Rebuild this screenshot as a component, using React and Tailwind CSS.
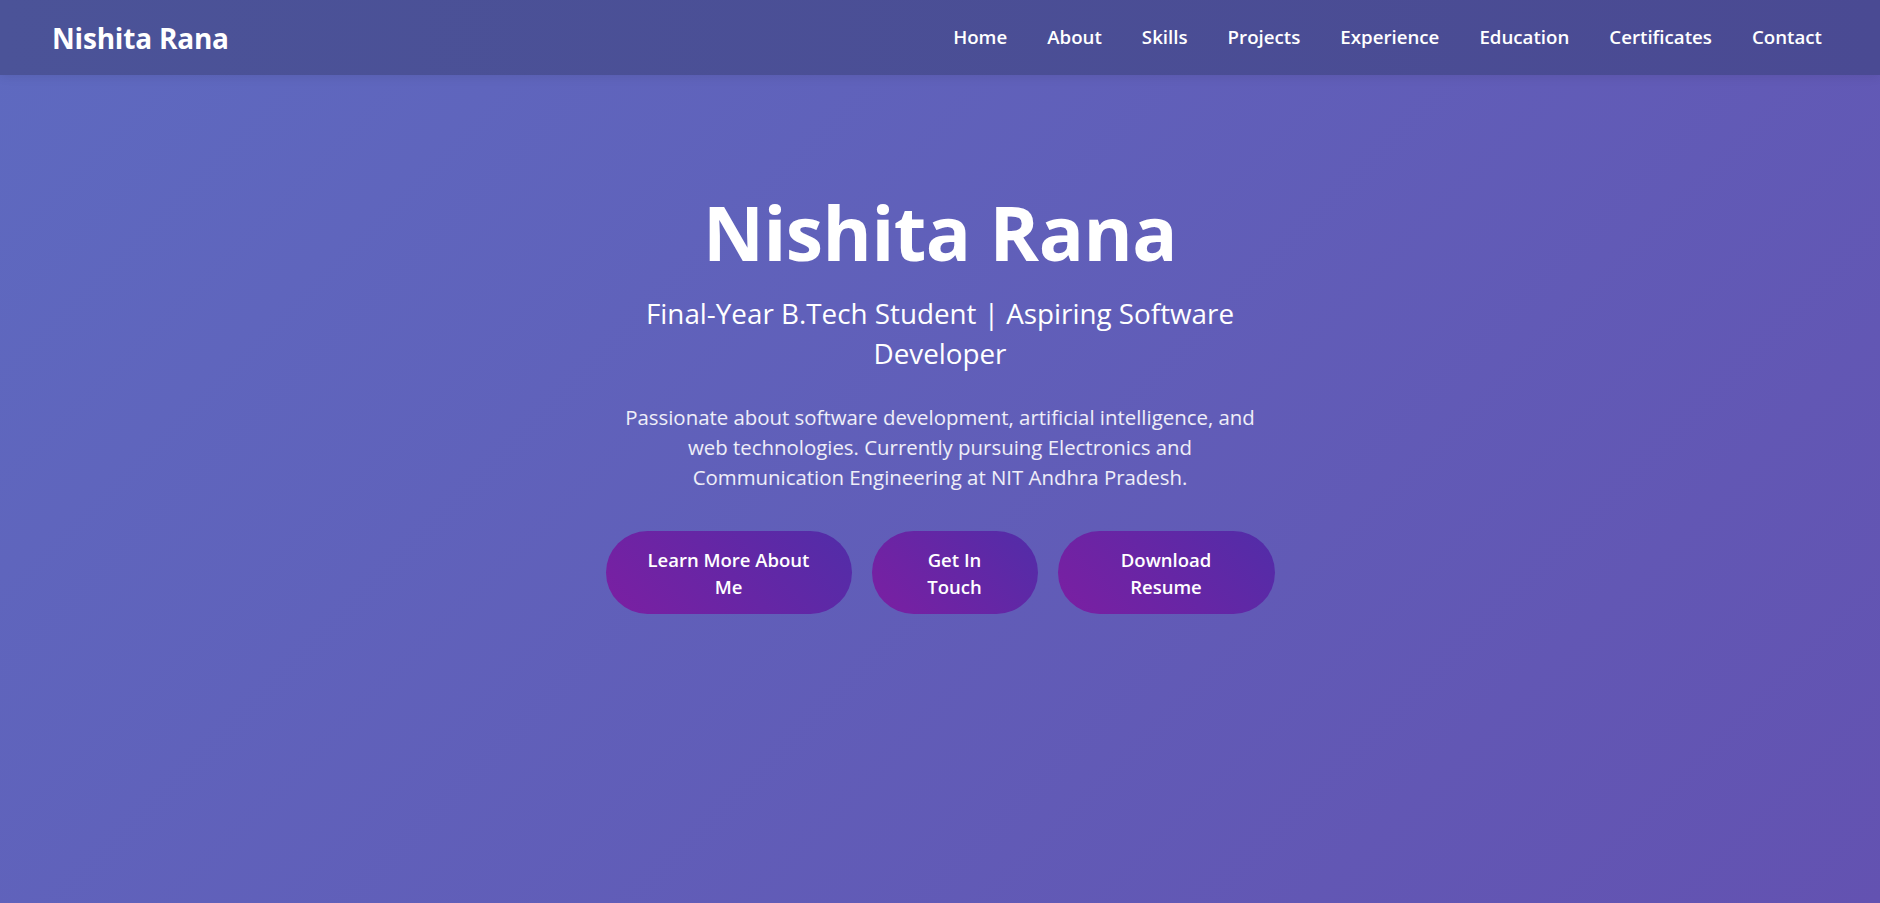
import React from "react";

const links = ["Home", "About", "Skills", "Projects", "Experience", "Education", "Certificates", "Contact"];

const buttons = [
  { label: "Learn More About Me", width: "w-[246px]" },
  { label: "Get In Touch", width: "w-[166px]" },
  { label: "Download Resume", width: "w-[217px]" },
];

function Navbar() {
  return (
    <nav className="h-[75px] flex items-center justify-between pl-[52px] pr-[58px] bg-[linear-gradient(90deg,#4b5398,#4a4a93)] shadow-[0_2px_10px_rgba(0,0,0,0.08)]">
      <a href="#home" className="text-[28px] font-bold text-white tracking-[-0.2px]">
        Nishita Rana
      </a>
      <ul className="flex items-center gap-[40px]">
        {links.map((link) => (
          <li key={link}>
            <a href={`#${link.toLowerCase()}`} className="text-[18.7px] font-semibold text-white">
              {link}
            </a>
          </li>
        ))}
      </ul>
    </nav>
  );
}

function Hero() {
  return (
    <section id="home" className="flex-1 flex flex-col items-center pt-[112px] text-center text-white">
      <h1 className="text-[75px] font-bold leading-[1.2] tracking-[-0.5px]">Nishita Rana</h1>
      <div className="w-[669px] flex flex-col items-center">
        <p className="mt-[16px] text-[27.8px] leading-[40px]">
          Final-Year B.Tech Student | Aspiring Software Developer
        </p>
        <p className="mt-[29px] max-w-[650px] text-[20.4px] leading-[30px] text-white/90">
          Passionate about software development, artificial intelligence, and web technologies. Currently pursuing
          Electronics and Communication Engineering at NIT Andhra Pradesh.
        </p>
        <div className="mt-[39px] flex gap-[20px]">
          {buttons.map((b) => (
            <a
              key={b.label}
              href="#"
              className={`${b.width} h-[83px] px-[30px] flex items-center justify-center rounded-full bg-[linear-gradient(45deg,#7b1fa2,#512da8)] text-[18.5px] font-semibold leading-[27px] text-white`}
            >
              {b.label}
            </a>
          ))}
        </div>
      </div>
    </section>
  );
}

export default function App() {
  return (
    <div className="min-h-[903px] flex flex-col bg-[linear-gradient(135deg,#5e6ac0,#6352b1)] font-['Open_Sans',sans-serif]">
      <Navbar />
      <Hero />
    </div>
  );
}
